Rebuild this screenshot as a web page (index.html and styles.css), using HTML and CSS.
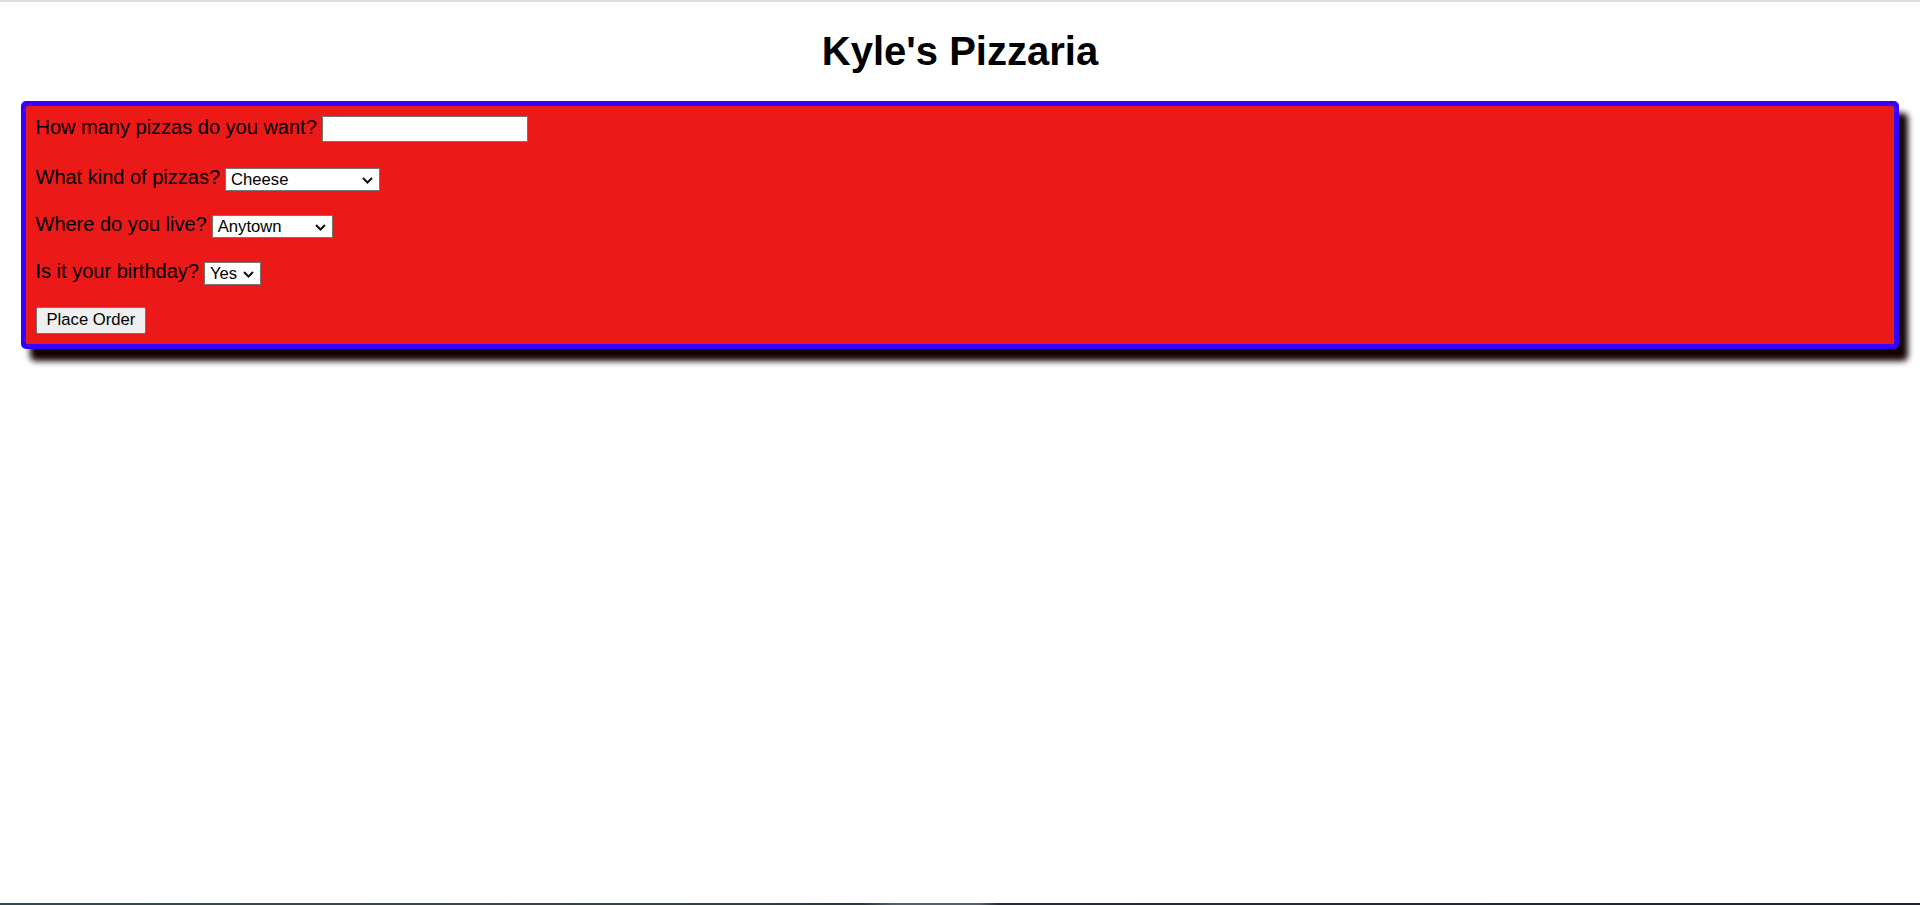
FILE: index.html
```html
<!DOCTYPE html>
<html lang="en">
<head>
<meta charset="utf-8">
<title>Kyle's Pizzaria</title>
<link rel="stylesheet" href="styles.css">
</head>
<body>
<div class="page">
  <div class="topline"></div>
  <main class="content">
    <h1 class="title">Kyle's Pizzaria</h1>
    <form class="order">
      <div class="row row-first">
        <label class="label" for="count">How many pizzas do you want?</label>
        <input class="text-input" id="count" type="text">
      </div>
      <div class="row">
        <label class="label" for="kind">What kind of pizzas?</label>
        <span class="select-wrap">
          <select class="select select-kind" id="kind">
            <option>Cheese</option>
            <option>Pepperoni</option>
            <option>Sausage</option>
            <option>Supreme</option>
          </select>
          <svg class="chevron" width="11" height="7" viewBox="0 0 11 7" aria-hidden="true"><path d="M1 1 L5.5 5.5 L10 1" fill="none" stroke="#111" stroke-width="2"/></svg>
        </span>
      </div>
      <div class="row">
        <label class="label" for="town">Where do you live?</label>
        <span class="select-wrap">
          <select class="select select-town" id="town">
            <option>Anytown</option>
            <option>Othertown</option>
          </select>
          <svg class="chevron" width="11" height="7" viewBox="0 0 11 7" aria-hidden="true"><path d="M1 1 L5.5 5.5 L10 1" fill="none" stroke="#111" stroke-width="2"/></svg>
        </span>
      </div>
      <div class="row">
        <label class="label" for="bday">Is it your birthday?</label>
        <span class="select-wrap">
          <select class="select select-bday" id="bday">
            <option>Yes</option>
            <option>No</option>
          </select>
          <svg class="chevron" width="11" height="7" viewBox="0 0 11 7" aria-hidden="true"><path d="M1 1 L5.5 5.5 L10 1" fill="none" stroke="#111" stroke-width="2"/></svg>
        </span>
      </div>
      <div class="row">
        <button class="btn" type="button">Place Order</button>
      </div>
    </form>
  </main>
  <div class="taskbar"></div>
</div>
</body>
</html>
```

FILE: styles.css
```css
html, body {
  margin: 0;
  padding: 0;
  background: #ffffff;
}

.page {
  height: 905px;
  display: flex;
  flex-direction: column;
  font-family: "Liberation Sans", Arial, sans-serif;
  color: #000;
  overflow: hidden;
}

.topline {
  height: 2px;
  background: #dadce0;
  flex: 0 0 auto;
}

.content {
  flex: 1 1 auto;
  display: flex;
  flex-direction: column;
}

.title {
  margin: 25.5px 0 27.5px;
  font-size: 40px;
  line-height: 46px;
  font-weight: bold;
  text-align: center;
}

.order {
  margin: 0 21px;
  border: 5px solid #3300ff;
  border-radius: 5px;
  background: #ec1919;
  box-shadow: 9px 12px 6px #140000;
  padding: 6px 9.5px 10px;
  display: flex;
  flex-direction: column;
  gap: 19px;
}

.row {
  height: 28px;
  display: flex;
  align-items: center;
  gap: 5px;
}

.row-first {
  height: 34px;
}

.label {
  font-size: 20px;
  line-height: 23px;
  margin-bottom: 3px;
  white-space: nowrap;
}

.text-input {
  box-sizing: border-box;
  width: 206px;
  height: 26px;
  margin: 0;
  padding: 1px 3px;
  border: 1px solid #767676;
  border-radius: 0;
  background: #fff;
  font-family: "Liberation Sans", Arial, sans-serif;
  font-size: 16.67px;
}

.select-wrap {
  position: relative;
  display: inline-flex;
}

.select {
  -webkit-appearance: none;
  appearance: none;
  box-sizing: border-box;
  height: 23px;
  margin: 0;
  padding: 0 20px 0 5px;
  border: 1px solid #767676;
  border-radius: 0;
  background-color: #fff;
  color: #000;
  font-family: "Liberation Sans", Arial, sans-serif;
  font-size: 16.67px;
  line-height: 21px;
}

.chevron {
  position: absolute;
  right: 7px;
  top: calc(50% - 2.5px);
  pointer-events: none;
}

.select-kind {
  width: 155px;
}

.select-town {
  width: 121px;
}

.select-bday {
  width: 57px;
}

.btn {
  box-sizing: border-box;
  height: 27px;
  margin: 0;
  padding: 0 10px;
  border: 1px solid #767676;
  border-radius: 2px;
  background: #efefef;
  color: #000;
  font-family: "Liberation Sans", Arial, sans-serif;
  font-size: 16.67px;
}

.taskbar {
  flex: 0 0 auto;
  height: 2px;
  background: linear-gradient(90deg, #2f4a50 0%, #3d4648 25%, #2a3a40 45%, #55606a 46.5%, #55606a 51%, #262c3c 52%, #1e2333 100%);
}
```
